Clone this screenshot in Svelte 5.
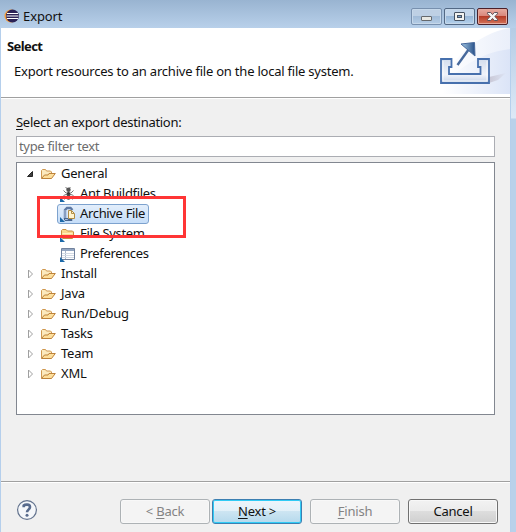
<script>
    const tree = [
        { label: "General", open: true, children: [
            { label: "Ant Buildfiles", icon: "ant" },
            { label: "Archive File", icon: "archive" },
            { label: "File System", icon: "folder" },
            { label: "Preferences", icon: "prefs" }
        ] },
        { label: "Install" },
        { label: "Java" },
        { label: "Run/Debug" },
        { label: "Tasks" },
        { label: "Team" },
        { label: "XML" }
    ];

    let selected = $state("Archive File");
    let filter = $state("");
</script>

{#snippet folder()}
    <svg class="icon" width="16" height="16" viewBox="0 0 16 16">
        <path d="M1.5 12V4.5l1-1h3l1 1.500h4l1 1V12z" fill="#fbe9bd" stroke="#cf9850" />
        <path d="M1.5 12.500L4.500 9h3.500l1-1.500h6.300L11.500 12.500z" fill="#fddf9c" stroke="#bd823b" stroke-linejoin="round" />
    </svg>
{/snippet}

{#snippet leafIcon(name)}
    <svg class="icon" width="16" height="16" viewBox="0 0 16 16">
        {#if name === "ant"}
            <path d="M5.5 1l2 2M10.5 1l-2 2M3.500 4.500L6 7h5l2.500-2.500M3.500 9.500L6 8.500h5l2.500 1M4.500 13.500v-2l2-1h4l2 1v2" fill="none" stroke="#777" />
            <circle cx="8.500" cy="3.800" r="2.200" fill="#555" />
            <circle cx="8.500" cy="7.500" r="1.600" fill="#333" />
            <ellipse cx="8.500" cy="11.200" rx="2.200" ry="2.600" fill="#4a4a4a" />
        {:else if name === "archive"}
            <path d="M5 12V4l2-2h3.500l2 2" fill="none" stroke="#5c77a2" stroke-width="2.400" />
            <path d="M5 4v8" stroke="#b4c6df" />
            <path d="M8.500 4.500h3l3 3v5h-6z" fill="#fff4cf" stroke="#b18d46" />
            <path d="M11.500 5v2.500H14" fill="none" stroke="#b18d46" />
            <path d="M4 12.500h4v1h4v1H5z" fill="#a9bedb" stroke="#48658f" />
        {:else if name === "folder"}
            <path d="M1.500 11.500v-7l1-1H6L7.500 5h5l1 1v5.500l-1 1H3z" fill="#f9d98f" stroke="#c98e40" />
            <path d="M2.500 7.500h10" stroke="#fff0c3" />
        {:else}
            <path d="M1.500 2.500h13v11h-13z" fill="#fff" stroke="#71829d" />
            <path d="M2 3h12v2H2z" fill="#91a4c0" />
            <path d="M5.500 5v8" stroke="#a8b6ca" />
            <path d="M2 7.500h12M2 9.500h12M2 11.500h12" stroke="#d3dae4" />
        {/if}
        <path d="M0 11v5h5z" fill="#1c69a8" />
    </svg>
{/snippet}

<div class="window">
    <div class="titlebar">
        <svg class="logo" width="16" height="14" viewBox="0 0 16 14">
            <circle cx="7" cy="7" r="6.500" fill="#f39a36" />
            <circle cx="8.500" cy="7" r="6.500" fill="#2c2255" />
            <path d="M3 4.500h11M2.500 7h12M3 9.500h11" stroke="#fff" stroke-width="1.200" />
        </svg>
        <span class="title">Export</span>
        <div class="controls">
            <button class="control" aria-label="Minimize">
                <svg width="30" height="16" viewBox="0 0 30 16"><rect x="10.500" y="8.500" width="10" height="4" rx=".5" fill="#e8e8e3" stroke="#65696d" /></svg>
            </button>
            <button class="control max" aria-label="Maximize">
                <svg width="30" height="16" viewBox="0 0 30 16"><rect x="10.500" y="4.500" width="10" height="8" rx=".5" fill="#f3f3f0" stroke="#475363" /><rect x="13.500" y="7.500" width="4" height="2" fill="#7fa3c9" stroke="#475363" /></svg>
            </button>
            <button class="control close" aria-label="Close">
                <svg width="30" height="16" viewBox="0 0 30 16"><path d="M10.500 4.500h3.200l1.800 2.100 1.800-2.100h3.200v1.300l-2.700 2.700 2.700 2.700v1.300h-3.200l-1.800-2.100-1.800 2.100h-3.200v-1.300l2.700-2.700-2.700-2.700z" fill="#f5f3f2" stroke="#60535b" /></svg>
            </button>
        </div>
    </div>

    <div class="dialog">
        <header>
            <div class="heading">
                <h1>Select</h1>
                <p>Export resources to an archive file on the local file system.</p>
            </div>
            <svg class="banner" width="75" height="66" viewBox="0 0 75 66">
                <defs>
                    <linearGradient id="wash" x1="0" y1="0" x2="1" y2="0">
                        <stop offset=".1" stop-color="#fff" />
                        <stop offset="1" stop-color="#dbe4f7" />
                    </linearGradient>
                    <linearGradient id="swirl" x1="0" y1="0" x2="1" y2="0">
                        <stop offset=".1" stop-color="#fff" />
                        <stop offset="1" stop-color="#eaeffa" />
                    </linearGradient>
                    <linearGradient id="tray" x1="0" y1="0" x2="0" y2="1">
                        <stop offset="0" stop-color="#d3dded" />
                        <stop offset=".65" stop-color="#f0f3fa" />
                        <stop offset="1" stop-color="#c5d2e8" />
                    </linearGradient>
                    <linearGradient id="shade" x1="0" y1="0" x2="1" y2="0">
                        <stop offset="0" stop-color="#b5afbd" />
                        <stop offset="1" stop-color="#dde3f3" />
                    </linearGradient>
                    <linearGradient id="head" x1="0" y1="0" x2="1" y2="0">
                        <stop offset="0" stop-color="#a7cce7" />
                        <stop offset="1" stop-color="#264f88" />
                    </linearGradient>
                </defs>
                <path d="M0 66C15 31 41 6 75 0v66z" fill="url(#swirl)" />
                <path d="M0 66C20 42 43 25 75 21v45z" fill="url(#wash)" />
                <path d="M54 49L71 45 63 52 54 55z" fill="url(#shade)" opacity=".6" />
                <path d="M6 31h10.500v8H14v7h31.500v-7H43v-8h11v24H6z" fill="url(#tray)" stroke="#4770ad" stroke-width="1.800" />
                <path d="M8 33v20h44V33" fill="none" stroke="#fff" opacity=".7" />
                <path d="M22.500 37L34 21" stroke="#47699c" stroke-width="2.400" />
                <path d="M26 16l13.500-1.500L40 28z" fill="url(#head)" stroke="#47699c" />
            </svg>
        </header>

        <main>
            <label for="filter"><u>S</u>elect an export destination:</label>
            <input id="filter" type="text" bind:value={filter} placeholder="type filter text">
            <div class="tree">
                {#each tree as node}
                    <div class="row">
                        <svg class="twisty" width="8" height="10" viewBox="0 0 8 10">
                            {#if node.open}
                                <path d="M6.500 2.500v5h-5z" fill="#404040" stroke="#262626" />
                            {:else}
                                <path d="M2.500 1v8l4-4z" fill="#fff" stroke="#a0a0a0" />
                            {/if}
                        </svg>
                        {@render folder()}
                        <span class="label">{node.label}</span>
                    </div>
                    {#if node.open}
                        {#each node.children as child}
                            <div class="row child">
                                <button class="leaf" class:selected={selected === child.label} onclick={() => selected = child.label}>
                                    {@render leafIcon(child.icon)}
                                    <span class="label">{child.label}</span>
                                </button>
                            </div>
                        {/each}
                    {/if}
                {/each}
                <div class="marker"></div>
            </div>
        </main>

        <footer>
            <svg class="help" width="22" height="22" viewBox="0 0 22 22">
                <circle cx="11" cy="11" r="9.400" fill="#f5f7fa" stroke="#63738e" stroke-width="1.200" />
                <path d="M7.700 8.200V6.500C8.800 5.500 14 4.600 14 8c0 2.500-3 2.700-3 5.200" fill="none" stroke="#586b8d" stroke-width="2.600" />
                <circle cx="11" cy="16.300" r="1.500" fill="#586b8d" />
            </svg>
            <button class="btn" disabled>&lt; <u>B</u>ack</button>
            <button class="btn default"><u>N</u>ext &gt;</button>
            <button class="btn finish" disabled><u>F</u>inish</button>
            <button class="btn cancel">Cancel</button>
        </footer>
    </div>
</div>

<style>
    :global(body) {
        overflow: hidden;
    }

    .window {
        box-sizing: border-box;
        width: 516px;
        height: 532px;
        padding: 0 6px 0 1px;
        background:
            linear-gradient(#a9c3df, #dce9f7 118px, #b9d1ea 119px) right 0 / 5px 100% no-repeat,
            #b5cfec;
        font-family: "Noto Sans", "Open Sans", sans-serif;
        font-size: 13px;
        letter-spacing: -.22px;
        color: #111;
    }

    button, input {
        font: inherit;
        letter-spacing: inherit;
        color: inherit;
        box-sizing: border-box;
    }

    u {
        text-decoration-thickness: 1px;
        text-underline-offset: 2px;
    }

    .titlebar {
        display: flex;
        height: 28px;
        margin: 0 -6px 0 -1px;
        padding-left: 4px;
        background: linear-gradient(#99b4d1, #b8d0ea);
    }

    .logo {
        margin-top: 9px;
    }

    .title {
        margin: 7px 0 0 3px;
        line-height: 18px;
        letter-spacing: -.1px;
    }

    .controls {
        display: flex;
        gap: 2px;
        margin: 8px 8px 0 auto;
    }

    .control {
        width: 31px;
        height: 17px;
        padding: 0;
        border: 1px solid #7890ae;
        border-radius: 2px;
        background: linear-gradient(#bed0e4 48%, #a2bcd8 50%, #b5cde6);
        box-shadow: inset 0 0 0 1px #c6d8ea;
    }

    .control svg {
        display: block;
        margin: -1px 0 0 -1px;
    }

    .max {
        border-color: #536985;
        background: linear-gradient(#c3d6eb 48%, #98b7d8 50%, #b5d2ed);
    }

    .close {
        border-color: #4b2029;
        background: linear-gradient(#e7aaa0, #d88579 48%, #b63c28 50%, #d4745a);
        box-shadow: inset 0 0 0 1px #e4a99d;
    }

    .dialog {
        display: flex;
        flex-direction: column;
        width: 509px;
        height: 504px;
        background: #f0f0f0;
    }

    header {
        display: flex;
        box-sizing: border-box;
        height: 71px;
        background: #fff;
        border-bottom: 1px solid #fff;
        box-shadow: inset 0 -1px #a0a0a0;
    }

    .heading {
        flex: 1;
        padding: 9px 0 0 6px;
        white-space: nowrap;
    }

    h1, p {
        margin: 0;
        font-size: 13px;
        line-height: 18px;
    }

    h1 {
        letter-spacing: -.6px;
    }

    p {
        margin: 7px 0 0 7px;
    }

    main {
        display: flex;
        flex-direction: column;
        padding: 14px 15px 0;
    }

    label {
        line-height: 18px;
        letter-spacing: -.29px;
    }

    input {
        height: 21px;
        margin-top: 5px;
        padding: 0 2px 1px;
        border: 1px solid #abadb3;
        background: #fff;
        outline: 0;
        letter-spacing: -.32px;
    }

    input::placeholder {
        color: #6d6d6d;
        opacity: 1;
    }

    .tree {
        position: relative;
        box-sizing: border-box;
        height: 253px;
        margin-top: 5px;
        padding: 1px 0 0 9px;
        border: 1px solid #828790;
        background: #fff;
        letter-spacing: -.34px;
    }

    .row {
        display: flex;
        align-items: center;
        height: 20px;
    }

    .twisty {
        margin-right: 6px;
    }

    .icon {
        flex: none;
    }

    .label {
        margin: -2px 0 0 4px;
        white-space: nowrap;
    }

    .row > .label {
        margin-left: 5px;
        letter-spacing: -.22px;
    }

    .child {
        padding-left: 31px;
    }

    .leaf {
        display: flex;
        align-items: center;
        height: 20px;
        padding: 0 3px 0 2px;
        border: 1px solid transparent;
        border-radius: 3px;
        background: none;
    }

    .leaf.selected {
        border-color: #7da2ce;
        background: linear-gradient(#e3eefb, #c6def9);
    }

    /* callout laid over the tree rows */
    .marker {
        position: absolute;
        left: 20px;
        top: 33px;
        box-sizing: border-box;
        width: 149px;
        height: 42px;
        border: 3px solid #ff3535;
        pointer-events: none;
    }

    footer {
        display: flex;
        margin-top: auto;
        height: 33px;
        padding: 17px 12px 0 15px;
        border-top: 1px solid #a0a0a0;
        box-shadow: inset 0 1px #fff;
    }

    .help {
        margin-right: 82px;
    }

    .btn {
        width: 90px;
        height: 25px;
        padding: 0 0 1px;
        line-height: 21px;
        border: 1px solid #707070;
        border-radius: 3px;
        background: linear-gradient(#f2f2f2, #ebebeb 48%, #dddddd 50%, #cfcfcf);
        box-shadow: inset 0 0 0 1px #f8f8f8;
    }

    .btn[disabled] {
        color: #838383;
        border-color: #adb2b5;
        background: #f4f4f4;
    }

    .default {
        margin-left: 2px;
        border-color: #3c7fb1;
        background: linear-gradient(#edf5fb, #e2f0f8 48%, #cde5f2 50%, #b5d9ec);
        box-shadow: inset 0 0 0 1px #31cbf5;
    }

    .finish, .cancel {
        margin-left: 8px;
    }
</style>
